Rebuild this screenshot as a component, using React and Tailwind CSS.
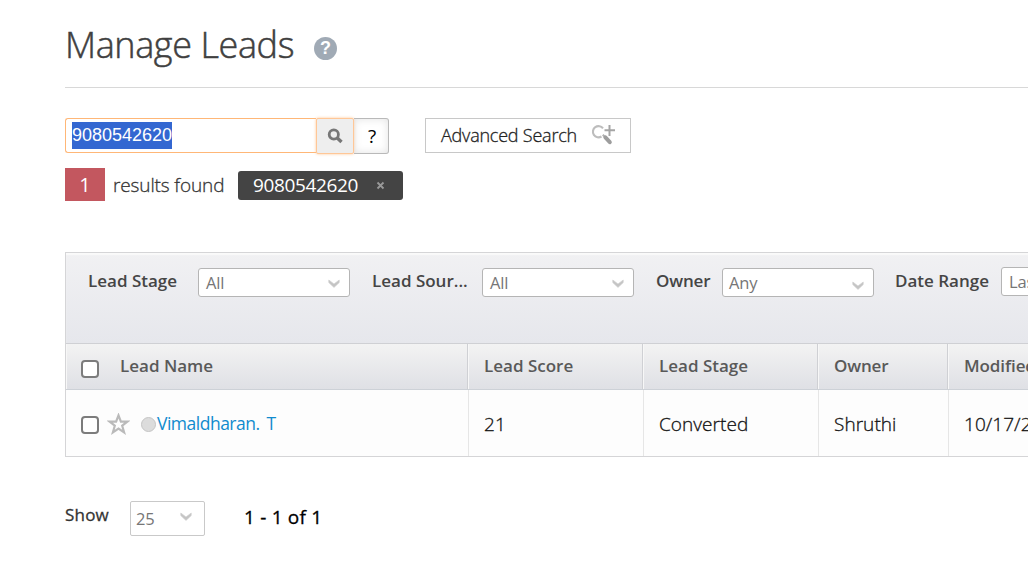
import React from "react";

function Chevron({ className = "" }) {
  return (
    <svg className={`shrink-0 ${className}`} width="12" height="9" viewBox="0 0 12 9" fill="none">
      <path d="M.8 1 6 5l5.2-4v2.6L6 8.4.8 3.6z" fill="#c4c4c4" stroke="#d0d0d0" strokeWidth=".7" />
    </svg>
  );
}

function Select({ value, className = "", chevron = "" }) {
  return (
    <div className={`flex shrink-0 justify-between rounded-[3px] border border-[#b5b5b5] bg-white pr-[9px] pl-[7px] text-[#767676] ${className}`}>
      <span className="text-[16.5px] leading-7 tracking-[-0.2px]">{value}</span>
      <Chevron className={chevron} />
    </div>
  );
}

function Box() {
  return <span className="block size-[18px] shrink-0 rounded-[4px] border-2 border-[#7c7c7c] bg-white" />;
}

const filterLabel = "shrink-0 whitespace-nowrap pt-[2px] text-[17px] leading-6 font-semibold text-[#454545]";
const head = "shrink-0 whitespace-nowrap border-r border-[#cfd0d4] border-l border-l-[#f7f7f7] pt-[10px] pl-[15px] text-[17px] leading-6 font-semibold text-[#595959]";
const cell = "shrink-0 whitespace-nowrap border-l border-[#e6e6e6] pt-[22px] pl-[15px] text-[19px] leading-6 font-light tracking-[0.05px] text-[#111] [-webkit-text-stroke:0.3px_#111]";

export default function App() {
  return (
    <main className="h-[569px] w-full overflow-hidden bg-white pl-[65px] font-['Open_Sans','Noto_Sans',sans-serif]">
      <header className="flex h-[88px] border-b border-[#d8d8d8]">
        <h1 className="w-[249px] pt-[20px] text-[36px] leading-[49px] font-light tracking-[-0.4px] whitespace-nowrap text-[#404040] [-webkit-text-stroke:0.5px_#404040]">Manage Leads</h1>
        <span className="mt-[37px] flex size-[23px] items-center justify-center rounded-full bg-[#a0aab5] font-['Liberation_Sans',sans-serif] text-[18px] font-bold text-white">?</span>
      </header>

      <section className="flex h-[80px] pt-[30px]">
        <div className="flex">
          <div className="h-[35px] w-[251px] rounded-l-[3px] border border-r-0 border-[#ffb777] pt-[3px] pl-[6px]">
            <span className="inline-block h-[27px] w-[100px] bg-[#3367d1] font-['Liberation_Sans',sans-serif] text-[18px] leading-[26px] text-white">9080542620</span>
          </div>
          <div className="flex h-[36px] w-[38px] items-center justify-center rounded-[2px] border border-[#ffc797] bg-[#eee] shadow-[0_0_3px_#ffc795]">
            <svg width="16" height="16" viewBox="0 0 16 16" fill="none" stroke="#777">
              <circle cx="6.8" cy="6.5" r="4.6" strokeWidth="2.8" />
              <path d="m10.3 10 4.2 4" strokeWidth="3.4" />
            </svg>
          </div>
          <div className="flex h-[36px] w-[35px] items-center justify-center rounded-r-[3px] border border-l-0 border-[#b9b9b9] pl-[2px] text-[19px] text-black shadow-[inset_0_0_8px_#e2e2e2]">?</div>
        </div>
        <button className="ml-[36px] flex h-[35px] w-[206px] items-start border border-[#c8c8c8] pt-[4px] pl-[15px] text-[18px] leading-6 font-light text-[#222] [-webkit-text-stroke:0.3px_#222]">
          <span className="w-[150px] text-left tracking-[-0.22px] whitespace-nowrap">Advanced Search</span>
          <svg className="mt-[1px] shrink-0" width="26" height="22" viewBox="0 0 26 22" fill="none">
            <path d="M12 4.4A5.6 5.6 0 1 0 10.5 12.5" stroke="#bdbdbd" strokeWidth="2.1" />
            <path d="m11.8 10.8 2.4 2.4" stroke="#b0b0b0" strokeWidth="2" />
            <path d="m14.4 13.4 4.4 4.8" stroke="#9d9d9d" strokeWidth="4" strokeLinecap="round" />
            <path d="M18.5 1v11M13.5 6.2H24" stroke="#a5a5a5" strokeWidth="2" />
          </svg>
        </button>
      </section>

      <section className="flex h-[84px] text-[19px] leading-6 text-[#333]">
        <span className="h-[33px] w-[40px] bg-[#c3575f] text-center text-[20px] leading-[34px] text-white">1</span>
        <span className="w-[133px] pt-[5px] pl-2 font-light tracking-[-0.12px] whitespace-nowrap [-webkit-text-stroke:0.3px_#333]">results found</span>
        <span className="mt-[3px] flex h-[29px] w-[165px] rounded-[3px] bg-[#444] pl-[15px] leading-[28px] text-white">
          <span className="w-[123px] tracking-[-0.35px]">9080542620</span>
          <svg className="mt-[10px]" width="9" height="9" viewBox="0 0 9 9">
            <path d="m1.5 1.5 6 6m0-6-6 6" stroke="#999" strokeWidth="1.8" />
          </svg>
        </span>
      </section>

      <section className="w-[1100px] border border-[#d5d5d7] bg-[#fdfdfd]">
        <div className="flex h-[91px] border-b border-[#cfd0d4] bg-linear-to-b from-[#f1f1f3] to-[#e6e7ec] pt-[14px] pl-[22px] shadow-[inset_0_2px_1px_#fafafa]">
          <span className={`${filterLabel} w-[110px]`}>Lead Stage</span>
          <Select value="All" className="mt-px h-[29px] w-[152px]" chevron="mt-[10px]" />
          <span className={`${filterLabel} w-[110px] ml-[22px]`}>Lead Sour...</span>
          <Select value="All" className="mt-px h-[29px] w-[152px]" chevron="mt-[10px]" />
          <span className={`${filterLabel} ml-[22px] w-[66px] tracking-[-0.15px]`}>Owner</span>
          <Select value="Any" className="mt-px h-[29px] w-[152px] pl-[6px]!" chevron="mt-[12px]" />
          <span className={`${filterLabel} ml-[21px] w-[106px]`}>Date Range</span>
          <Select value="Last 30 Days" className="h-[29px] w-[152px]" chevron="mt-[11px]" />
        </div>
        <div className="flex h-[46px] border-b border-[#cdd1d7] bg-linear-to-b from-[#f3f3f3] to-[#dfe0e5]">
          <div className={`${head} flex w-[402px] pl-[14px]!`}>
            <span className="mt-[6px] mr-[21px]"><Box /></span>Lead Name
          </div>
          <div className={`${head} w-[175px]`}>Lead Score</div>
          <div className={`${head} w-[175px]`}>Lead Stage</div>
          <div className={`${head} w-[130px] tracking-[-0.15px]`}>Owner</div>
          <div className={`${head} w-[218px] tracking-[-0.1px]`}>Modified On</div>
        </div>
        <div className="flex h-[66px]">
          <div className="flex w-[402px] shrink-0 pt-[26px] pl-[15px]">
            <Box />
            <svg className="-mt-[3px] ml-[8px] shrink-0" width="23" height="23" viewBox="0 0 23 23">
              <path d="m11.5 2.4 2.4 6.3h6.4l-5.1 4 1.9 6.6-5.6-3.8-5.6 3.8 1.9-6.6-5.1-4h6.4z" fill="#fdfdfd" stroke="#bababa" strokeWidth="2.2" />
            </svg>
            <span className="mt-[1px] ml-[11px] size-[15px] shrink-0 rounded-full border border-[#c5c5c5] bg-[#dcdcdc]" />
            <a className="-mt-[5px] ml-[1px] text-[17.5px] leading-6 tracking-[-0.5px] [word-spacing:3px] whitespace-nowrap text-[#118bce]">Vimaldharan. T</a>
          </div>
          <div className={`${cell} w-[175px]`}>21</div>
          <div className={`${cell} w-[175px]`}>Converted</div>
          <div className={`${cell} w-[130px]`}>Shruthi</div>
          <div className={`${cell} w-[218px]`}>10/17/2023</div>
        </div>
      </section>

      <footer className="flex pt-[44px]">
        <span className="w-[65px] pt-[2px] text-[17px] leading-6 tracking-[0.2px] text-[#333] [-webkit-text-stroke:0.3px_#333]">Show</span>
        <Select value="25" className="h-[35px] w-[75px] rounded-[2px]! border-[#c9c9c9] pr-[12px]! pl-[5px]! pt-[3px]" chevron="mt-[7px]" />
        <span className="ml-[39px] pt-[4px] text-[19px] leading-6 tracking-[0.2px] whitespace-nowrap text-black [-webkit-text-stroke:0.3px_#000]">1 - 1 of 1</span>
      </footer>
    </main>
  );
}
